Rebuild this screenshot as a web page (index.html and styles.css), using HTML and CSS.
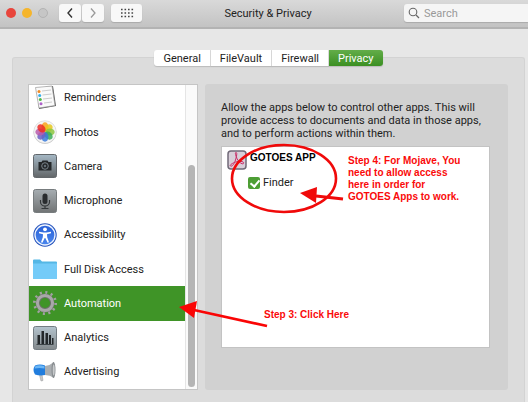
FILE: index.html
```html
<!DOCTYPE html>
<html lang="en">
<head>
<meta charset="utf-8">
<title>Security &amp; Privacy</title>
<link rel="stylesheet" href="styles.css">
</head>
<body>
<header class="titlebar">
  <div class="lights"><span class="light red"></span><span class="light yellow"></span><span class="light off"></span></div>
  <div class="nav">
    <button class="tool" aria-label="Back"><svg width="8" height="12" viewBox="0 0 8 12"><path d="M6 1.500L2 6l4 4.500" fill="none" stroke="#333" stroke-width="1.400"/></svg></button>
    <button class="tool" aria-label="Forward"><svg width="8" height="12" viewBox="0 0 8 12"><path d="M2 1.500L6 6l-4 4.500" fill="none" stroke="#999" stroke-width="1.300"/></svg></button>
  </div>
  <button class="tool wide" aria-label="Show all"><svg width="14" height="10" viewBox="0 0 14 10"><path d="M1 1.500h13M1 5h13M1 8.500h13" stroke="#444" stroke-width="1.600" stroke-dasharray="1.600 1.900"/></svg></button>
  <h1 class="title">Security &amp; Privacy</h1>
  <label class="search">
    <svg width="12" height="12" viewBox="0 0 12 12"><circle cx="5" cy="5" r="3.800" fill="none" stroke="#666" stroke-width="1.100"/><path d="M8 8l3 3" stroke="#666" stroke-width="1.300"/></svg>
    <input type="search" placeholder="Search" aria-label="Search">
  </label>
</header>
<main class="content">
  <nav class="tabs">
    <button class="tab">General</button><button class="tab">FileVault</button><button class="tab">Firewall</button><button class="tab active">Privacy</button>
  </nav>
  <section class="panel">
    <div class="list">
      <div class="items">
        <button class="item"><svg class="icon" viewBox="0 0 24 24"><path d="M4 3l16-2 3 20-17 3z" fill="#555"/><path d="M2.500 2.500L19 1l3 19.500L6 23z" fill="#fafafa" stroke="#999" stroke-width=".7"/><path d="M9 6l9-1M9.500 10l9-1M10 14l9-1M11 18l8-1" stroke="#ccc"/><circle cx="6" cy="6.500" r="1.500" fill="#f08a24"/><circle cx="6.700" cy="10.500" r="1.500" fill="#35aeea"/><circle cx="7.300" cy="14.500" r="1.500" fill="#51b848"/><circle cx="8" cy="18.700" r="1.500" fill="#ae61c9"/></svg>Reminders</button>
        <button class="item"><svg class="icon" viewBox="0 0 24 24"><circle cx="12" cy="12.500" r="11.300" fill="#bbb"/><circle cx="12" cy="12" r="11.300" fill="#f5f5f5" stroke="#ccc" stroke-width=".5"/><g fill-opacity=".85"><ellipse cx="12" cy="7" rx="3.500" ry="4.700" fill="#f9a11b"/><ellipse cx="12" cy="7" rx="3.500" ry="4.700" fill="#e6c81c" transform="rotate(45 12 12)"/><ellipse cx="12" cy="7" rx="3.500" ry="4.700" fill="#8cc63f" transform="rotate(90 12 12)"/><ellipse cx="12" cy="7" rx="3.500" ry="4.700" fill="#3bad58" transform="rotate(135 12 12)"/><ellipse cx="12" cy="7" rx="3.500" ry="4.700" fill="#3a7bdc" transform="rotate(180 12 12)"/><ellipse cx="12" cy="7" rx="3.500" ry="4.700" fill="#6a60c4" transform="rotate(225 12 12)"/><ellipse cx="12" cy="7" rx="3.500" ry="4.700" fill="#b95aab" transform="rotate(270 12 12)"/><ellipse cx="12" cy="7" rx="3.500" ry="4.700" fill="#ed2b24" transform="rotate(315 12 12)"/></g></svg>Photos</button>
        <button class="item"><svg class="icon" viewBox="0 0 24 24"><defs><linearGradient id="steel" x2="0" y2="1"><stop offset="0" stop-color="#a5b8c5"/><stop offset="1" stop-color="#626668"/></linearGradient><linearGradient id="analytics" x2="0" y2="1"><stop offset="0" stop-color="#b4c4ce"/><stop offset="1" stop-color="#83898c"/></linearGradient><linearGradient id="grey" x2="0" y2="1"><stop offset="0" stop-color="#a6adb1"/><stop offset="1" stop-color="#717475"/></linearGradient></defs><rect x=".5" y=".5" width="23" height="23" rx="2" fill="url(#steel)" stroke="#62676b"/><path d="M5.500 8h3l1-1.500h5L15.500 8h3v8.500h-13z" fill="#25282a"/><circle cx="12" cy="12" r="3.300" fill="#25282a" stroke="#79838a"/><circle cx="12" cy="12" r="1.200" fill="#657078"/></svg>Camera</button>
        <button class="item"><svg class="icon" viewBox="0 0 24 24"><rect x=".5" y=".5" width="23" height="23" rx="2" fill="url(#grey)" stroke="#777c7e"/><rect x="9.500" y="4.500" width="5" height="10.500" rx="2.500" fill="#292c2e"/><path d="M7.500 11v2a4.500 4 0 0 0 9 0v-2M12 17v2.500M8.500 19.500h7" fill="none" stroke="#34383a" stroke-width="1.200"/></svg>Microphone</button>
        <button class="item"><svg class="icon" viewBox="0 0 24 24"><defs><linearGradient id="blue" x2="0" y2="1"><stop offset="0" stop-color="#2860d8"/><stop offset="1" stop-color="#4b87ed"/></linearGradient></defs><circle cx="12" cy="12" r="11.700" fill="#2755bd"/><circle cx="12" cy="12" r="10" fill="url(#blue)" stroke="#eef4ff" stroke-width="1.300"/><circle cx="12" cy="6.300" r="1.900" fill="#fff"/><path d="M6 8.800l4.500.7h3L18 8.800v1.500l-4 1 .2 3 1.800 5-1.400.5-2.300-4.700h-.6l-2.300 4.700-1.400-.5 1.800-5 .2-3-4-1z" fill="#fff"/></svg>Accessibility</button>
        <button class="item"><svg class="icon" viewBox="0 0 24 24"><path d="M0 3.500q0-1 1-1h6l2 2h14q1 0 1 1V21q0 1-1 1H1q-1 0-1-1z" fill="#55b7e5"/><path d="M0 6.500h24V21q0 1-1 1H1q-1 0-1-1z" fill="#74cbf8"/></svg>Full Disk Access</button>
        <button class="item selected"><svg class="icon" viewBox="0 0 24 24"><circle cx="12" cy="12" r="10.300" fill="none" stroke="#a2a2a2" stroke-width="3.400" stroke-dasharray="2 3.393"/><circle cx="12" cy="12" r="7.300" fill="none" stroke="#6c7269" stroke-width="4.400"/><circle cx="12" cy="12" r="7.600" fill="none" stroke="#a8a8a8" stroke-width="3"/></svg>Automation</button>
        <button class="item"><svg class="icon" viewBox="0 0 24 24"><rect x=".5" y=".5" width="23" height="23" rx="2" fill="url(#analytics)" stroke="#747d83"/><path d="M4.500 9H7v9H4.500zM8.500 5H11v13H8.500zM12.500 7H15v11h-2.500zM16 9h2v9h-2zM19 12h1.500v6H19z" fill="#22272a"/><path d="M3.500 18.500h17" stroke="#3d4448"/></svg>Analytics</button>
        <button class="item"><svg class="icon" viewBox="0 0 24 24"><path d="M6 13l2 8 2-.5-1-6z" fill="#c5c8cb" stroke="#999" stroke-width=".5"/><path d="M2 5.500q5-2 10 0v9.500Q7 16 2 14.500q-3-4.500 0-9z" fill="#217ddd"/><path d="M2.500 6q4-1.500 9 .3v2.200q-5-1-10 0z" fill="#6bb6f5"/><path d="M12 6q5-.5 9-4v16q-4-3-9-3z" fill="#aaaeb1"/><ellipse cx="20.500" cy="10" rx="2" ry="8" fill="#888d90"/><ellipse cx="20.700" cy="10" rx="1" ry="5.500" fill="#c7cacc"/></svg>Advertising</button>
      </div>
      <div class="track"><div class="thumb"></div></div>
    </div>
    <div class="detail">
      <p class="message">Allow the apps below to control other apps. This will<br>provide access to documents and data in those apps,<br>and to perform actions within them.</p>
      <div class="apps">
        <div class="app"><svg width="20" height="20" viewBox="0 0 20 20"><rect x="1" y="1" width="18" height="18" rx="3" fill="#d8cfd9" stroke="#706a78" stroke-width="1.500"/><path d="M9 2.500c1.500 0 .5 4-.5 7.500S5 17 3.500 16s3.500-4 7.500-4.500 6.500.5 5.500 2-5-1.500-6.500-5-2.200-6-1-6z" fill="none" stroke="#c92b67"/></svg><strong>GOTOES APP</strong></div>
        <label class="target"><input type="checkbox" checked>Finder</label>
        <svg class="marks" width="320" height="200" viewBox="0 0 320 200"><ellipse cx="112" cy="31.500" rx="52" ry="33.500" fill="none" stroke="#f00a0a" stroke-width="2.600"/><path d="M171 52l-27-3" stroke="#f00a0a" stroke-width="3"/><path d="M128 46l17-6-1 16z" fill="#f00a0a"/><path d="M95 179L22 163" stroke="#fa0505" stroke-width="2.800"/><path d="M7 160l18-6-3 17z" fill="#fa0505"/></svg>
        <p class="note allow">Step 4: For Mojave, You<br>need to allow access<br>here in order for<br>GOTOES Apps to work.</p>
        <p class="note click">Step 3: Click Here</p>
      </div>
    </div>
  </section>
</main>
</body>
</html>
```

FILE: styles.css
```css
* { box-sizing: border-box; }
body {
  margin: 0;
  min-height: 100vh;
  display: flex;
  flex-direction: column;
  overflow: hidden;
  background: #e7e7e7;
  color: #222;
  font: 11px/13px Roboto, "Liberation Sans", sans-serif;
}
button, input { font: inherit; color: inherit; border: 0; margin: 0; padding: 0; }
svg { display: block; flex: none; }
p, h1 { margin: 0; }

.titlebar {
  display: flex;
  align-items: center;
  height: 29px;
  padding: 0 0 1px 6px;
  background: linear-gradient(#d9d9d9, #c3c3c3);
  border-bottom: 2px solid #b3b3b3;
}
.lights { display: flex; gap: 6px; margin-right: 11px; }
.light { width: 10px; height: 10px; border-radius: 50%; }
.red { background: #e8453c; }
.yellow { background: #f5b52c; }
.off { background: #c6c6c6; border: 1px solid #b3b3b3; }
.nav { display: flex; gap: 1px; margin-right: 7px; }
.tool {
  display: grid;
  place-items: center;
  width: 22px;
  height: 18px;
  border-radius: 3px;
  background: #f8f8f8;
  box-shadow: 0 1px 1px #aaa;
}
.wide { width: 31px; }
.title { flex: 1; padding-right: 10px; text-align: center; font-size: 11px; font-weight: 400; }
.search {
  display: flex;
  align-items: center;
  gap: 4px;
  width: 124px;
  height: 18px;
  padding-left: 4px;
  border-radius: 3px 0 0 3px;
  background: #f5f5f5;
  box-shadow: 0 1px 1px #aaa;
}
.search input { flex: 1; min-width: 0; background: none; outline: 0; }
.search input::placeholder { color: #999; }

.content { flex: 1; display: flex; flex-direction: column; padding: 21px 3px 0 12px; }
.tabs { display: flex; align-self: center; z-index: 1; }
.tab {
  height: 16px;
  padding: 0 9px;
  background: #fff;
  border-right: 1px solid #ddd;
  box-shadow: 0 1px 1px #bbb;
}
.tab:first-child { border-radius: 3px 0 0 3px; }
.tab.active {
  border: 0;
  border-radius: 0 3px 3px 0;
  background: linear-gradient(#63ad49, #3b8f22);
  color: #fff;
}
.panel {
  flex: 1;
  display: flex;
  align-items: flex-start;
  gap: 7px;
  margin-top: -9px;
  padding: 26px 16px 12px 15px;
  background: #dcdcdc;
  border: 1px solid #d3d3d3;
  border-bottom: 0;
  border-radius: 3px 3px 0 0;
}
.list { display: flex; flex: none; width: 170px; height: 306px; border: 1px solid #c5c5c5; background: #fff; }
.items { flex: 1; display: grid; grid-template-rows: 30px repeat(8, 1fr); }
.item {
  display: flex;
  align-items: center;
  gap: 7px;
  padding-left: 4px;
  background: none;
  text-align: left;
}
.item:first-child { padding-bottom: 6px; }
.item.selected { background: #3f9427; color: #fff; }
.icon { width: 24px; height: 24px; }
.track { width: 12px; padding: 80px 2px 2px; background: #fafafa; border-left: 1px solid #e5e5e5; }
.thumb { height: 100%; border-radius: 4px; background: #b5b5b5; }

.detail { flex: 1; min-width: 0; height: 306px; padding: 17px 18px 0 16px; border-radius: 3px; background: #d1d1d1; }
.message { white-space: nowrap; }
.apps {
  position: relative;
  height: 202px;
  margin-top: 6px;
  padding: 3px 5px;
  border: 1px solid #c3c3c3;
  background: #fff;
}
.app { display: flex; gap: 3px; color: #000; }
.app strong { font: bold 10px/16px "Liberation Sans", sans-serif; }
.target { display: flex; align-items: center; gap: 3px; margin: 6px 0 0 21px; }
.target input {
  appearance: none;
  width: 12px;
  height: 12px;
  border-radius: 2px;
  background: #4d9e35;
}
.target input::before {
  content: "";
  display: block;
  width: 4px;
  height: 7px;
  margin: 1px 0 0 4px;
  border: solid #fff;
  border-width: 0 2px 2px 0;
  transform: rotate(40deg);
}
.marks { position: absolute; left: -50px; top: 0; overflow: visible; pointer-events: none; }
.note {
  position: absolute;
  color: #fa0a0a;
  font: bold 10px/12px "Liberation Sans", sans-serif;
  white-space: nowrap;
}
.allow { left: 126px; top: 8px; }
.click { left: 42px; top: 162px; }
```
